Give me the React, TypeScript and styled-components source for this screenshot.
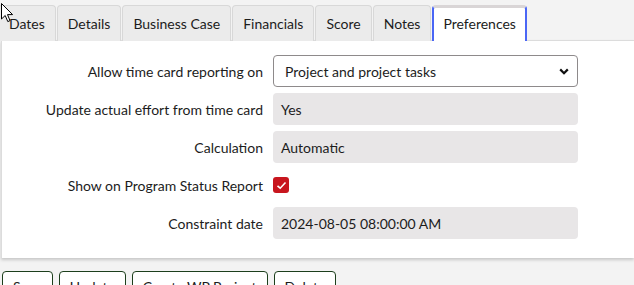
import React from "react";
import styled, { createGlobalStyle } from "styled-components";

const Global = createGlobalStyle`
  html, body { margin: 0; padding: 0; background: #f3f3f3; }
  body { font-family: Lato, "Noto Sans", sans-serif; color: #1c1c1c; overflow: hidden; }
  * { box-sizing: border-box; }
`;

const Page = styled.div`
  position: relative;
  width: 634px;
  height: 285px;
  padding-top: 5px;
  overflow: hidden;
`;

const TabBar = styled.div`
  display: flex;
  gap: 1px;
  margin-left: -2px;
  height: 36px;
  position: relative;
  z-index: 1;
`;

const Tab = styled.div<{ $active?: boolean }>`
  display: flex;
  align-items: center;
  padding: 0 10px 1px;
  font-size: 14px;
  border-radius: 4px 4px 0 0;
  background: ${(p) => (p.$active ? "#fff" : "#ebebeb")};
  border: 1px solid #d8d8d8;
  border-bottom: none;
  ${(p) =>
    p.$active &&
    `
    border-top: 3px solid #d9d5d6;
    border-left: 2px solid #4a66f5;
    border-right: 2px solid #4a66f5;
    padding: 0 9px 3px;
  `}
`;

const Panel = styled.div`
  background: #fff;
  border-top: 1px solid #dcdcdc;
  border-left: 1px solid #dcdcdc;
  margin-left: 1px;
  margin-top: -1px;
  padding: 14px 0 19px;
  display: flex;
  flex-direction: column;
  gap: 6px;
  box-shadow: 0 2px 3px rgba(0, 0, 0, 0.18);
`;

const Row = styled.div`
  display: grid;
  grid-template-columns: 261px 305px;
  column-gap: 10px;
  align-items: center;
  height: 32px;
`;

const Label = styled.div`
  text-align: right;
  font-size: 14px;
`;

const Field = styled.div`
  height: 32px;
  background: #e8e6e7;
  border-radius: 4px;
  display: flex;
  align-items: center;
  padding: 0 8px;
  font-size: 14px;
`;

const Select = styled.div`
  height: 32px;
  background: #fff;
  border: 1px solid #8e8a8b;
  border-radius: 4px;
  display: flex;
  align-items: center;
  justify-content: space-between;
  padding: 0 8px 0 11px;
  font-size: 14px;
`;

const Check = styled.div`
  width: 16px;
  height: 16px;
  background: #c8161e;
  border-radius: 3px;
  display: flex;
  align-items: center;
  justify-content: center;
`;

const ButtonBar = styled.div`
  display: flex;
  gap: 6px;
  padding: 13px 0 0 2px;
`;

const Button = styled.div`
  background: #fff;
  border: 1px solid #1d3f1c;
  border-radius: 4px;
  height: 30px;
  padding: 6px 10px;
  font-size: 14px;
  white-space: nowrap;
`;

const Cursor = styled.svg`
  position: absolute;
  left: 1px;
  top: 3px;
  z-index: 5;
`;

export default function App() {
  return (
    <Page>
      <Global />
      <TabBar>
        <Tab>Dates</Tab>
        <Tab>Details</Tab>
        <Tab>Business Case</Tab>
        <Tab>Financials</Tab>
        <Tab>Score</Tab>
        <Tab>Notes</Tab>
        <Tab $active>Preferences</Tab>
      </TabBar>
      <Panel>
        <Row>
          <Label>Allow time card reporting on</Label>
          <Select>
            <span>Project and project tasks</span>
            <svg width="10" height="7" viewBox="0 0 10 7">
              <path d="M1.2 1.4 L5 5.2 L8.8 1.4" fill="none" stroke="#111" strokeWidth="2.2" />
            </svg>
          </Select>
        </Row>
        <Row>
          <Label>Update actual effort from time card</Label>
          <Field>Yes</Field>
        </Row>
        <Row>
          <Label>Calculation</Label>
          <Field>Automatic</Field>
        </Row>
        <Row>
          <Label>Show on Program Status Report</Label>
          <Check>
            <svg width="11" height="9" viewBox="0 0 11 9">
              <path d="M1.5 4.8 L4.2 7.2 L9.5 1.5" fill="none" stroke="#fff" strokeWidth="1.6" />
            </svg>
          </Check>
        </Row>
        <Row>
          <Label>Constraint date</Label>
          <Field>2024-08-05 08:00:00 AM</Field>
        </Row>
      </Panel>
      <ButtonBar>
        <Button>Save</Button>
        <Button>Update</Button>
        <Button>Create WP Project</Button>
        <Button>Delete</Button>
      </ButtonBar>
      <Cursor width="13" height="20" viewBox="0 0 13 20">
        <path d="M0.5 0.5 L0.5 16 L4.2 12.5 L6.8 18.6 L9 17.6 L6.5 11.6 L11.6 11.6 Z" fill="#fff" stroke="#000" strokeWidth="1" />
      </Cursor>
    </Page>
  );
}
